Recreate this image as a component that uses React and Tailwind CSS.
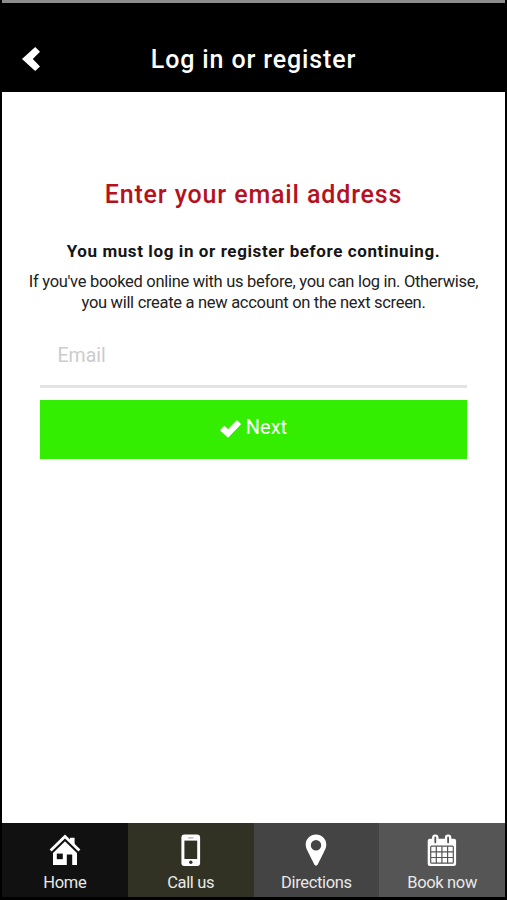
import React, { useState } from "react";

function BackIcon() {
  return (
    <svg viewBox="0 0 18 24" className="w-[18px] h-6" fill="#fff">
      <path d="M13.2 0 L18 4.8 L10.8 12 L18 19.4 L13.2 24 L0 12 Z" />
    </svg>
  );
}

function CheckIcon() {
  return (
    <svg viewBox="0 0 21 19" className="mt-[3px] w-[21px] h-[19px]" fill="#fff" stroke="#fff" strokeLinejoin="round">
      <path d="M1 11.2 L4.3 7.8 L8.2 11.3 L16.8 2.2 L20 5.2 L8 17.6 Z" strokeWidth="1.6" />
    </svg>
  );
}

function HomeIcon() {
  return (
    <svg viewBox="0 0 32 32" className="w-8 h-8">
      <path d="M21 3.8 H25.6 V13 L21 8.5 Z" fill="#fff" />
      <path d="M4 17.6 L16 6 L28 17.6 V31 H23.2 V20.5 H17.8 V31 H4 Z" fill="#fff" />
      <path d="M7.8 19.6 H13.8 V25.2 H7.8 Z" fill="#111" />
      <path d="M2.6 18.2 L16 5 L29.4 18.2" fill="none" stroke="#111" strokeWidth="3.2" />
      <path d="M1.6 16.6 L16 2.4 L30.4 16.6" fill="none" stroke="#fff" strokeWidth="2.8" />
    </svg>
  );
}

function PhoneIcon() {
  return (
    <svg viewBox="0 0 32 32" className="w-8 h-8">
      <rect x="6.4" y="0.5" width="18.7" height="31.5" rx="3" fill="#fff" />
      <rect x="9.4" y="6.6" width="12.8" height="18.4" fill="#323224" />
      <rect x="13.1" y="3.2" width="5.5" height="1.2" rx="0.6" fill="#aaa" />
      <circle cx="15.8" cy="28.3" r="1.7" fill="#323224" />
    </svg>
  );
}

function PinIcon() {
  return (
    <svg viewBox="0 0 32 32" className="w-8 h-8">
      <path
        d="M16 0.6 C10.2 0.6 5.7 5 5.7 10.6 C5.7 13.8 7 16 8.3 18.6 L14.3 30.6 C15 32 17 32 17.7 30.6 L23.7 18.6 C25 16 26.3 13.8 26.3 10.6 C26.3 5 21.8 0.6 16 0.6 Z M16 6 A5.2 5.2 0 1 1 16 16.4 A5.2 5.2 0 1 1 16 6 Z"
        fill="#fff"
        fillRule="evenodd"
      />
    </svg>
  );
}

function CalendarIcon() {
  return (
    <svg viewBox="0 0 32 32" className="w-8 h-8">
      <rect x="1.7" y="4.8" width="28.4" height="27.2" rx="2.2" fill="#fff" />
      <rect x="6.1" y="0.4" width="6.4" height="10.5" rx="3" fill="#fff" />
      <rect x="18.9" y="0.4" width="6.4" height="10.5" rx="3" fill="#fff" />
      <path d="M9.3 3.4 V8.4 M22.1 3.4 V8.4" stroke="#555" strokeWidth="1.8" strokeLinecap="round" />
      <rect x="4.7" y="12.2" width="22.6" height="17" rx="1" fill="none" stroke="#555" strokeWidth="1.2" />
      <path
        d="M10.3 12.2 V29.2 M15.9 12.2 V29.2 M21.6 12.2 V29.2 M4.7 17.8 H27.3 M4.7 23.5 H27.3"
        stroke="#555"
        strokeWidth="1.2"
      />
    </svg>
  );
}

const tabs = [
  { label: "Home", icon: HomeIcon, bg: "bg-[#111111]" },
  { label: "Call us", icon: PhoneIcon, bg: "bg-[#323224]" },
  { label: "Directions", icon: PinIcon, bg: "bg-[#444444]" },
  { label: "Book now", icon: CalendarIcon, bg: "bg-[#555555]" },
];

function App() {
  const [email, setEmail] = useState("");

  return (
    <div className="flex h-[900px] w-[507px] flex-col overflow-hidden bg-black font-['Roboto',sans-serif]">
      {/* Status bar edge */}
      <div className="mx-[2px] h-[2.5px] shrink-0 bg-[#8c8c8c]" />

      {/* Header */}
      <header className="grid h-[89px] shrink-0 grid-cols-[60px_1fr_60px] items-center pt-[26px]">
        <button className="mb-[2px] ml-[22px]" aria-label="Back">
          <BackIcon />
        </button>
        <h1 className="whitespace-nowrap text-center text-[25px] font-medium leading-8 tracking-[0.87px] text-white">
          Log in or register
        </h1>
      </header>

      {/* Email form */}
      <main className="mx-[2px] flex h-[731px] shrink-0 flex-col bg-white pt-[87px] text-center">
        <h2 className="whitespace-nowrap text-[25px] font-medium leading-8 tracking-[0.86px] text-[#b5121f]">
          Enter your email address
        </h2>
        <p className="mt-[30px] whitespace-nowrap text-[17px] font-bold leading-5 tracking-[0.6px] text-[#151515]">
          You must log in or register before continuing.
        </p>
        <p className="mt-[10px] whitespace-nowrap text-[16.5px] leading-[21px] tracking-[-0.3px] text-[#222222]">
          If you've booked online with us before, you can log in. Otherwise,
          <br />
          you will create a new account on the next screen.
        </p>
        <form className="mx-[38px] mt-[9px] flex flex-col" onSubmit={(e) => e.preventDefault()}>
          <input
            type="text"
            placeholder="Email"
            value={email}
            onChange={(e) => setEmail(e.target.value)}
            className="h-[66px] border-b-[3px] border-[#e3e3e3] px-[17.5px] pt-[5px] text-[19.5px] outline-none placeholder:text-[#cccccc]"
          />
          <button
            type="submit"
            className="mt-3 flex h-[59px] items-center justify-center gap-[5px] bg-[#33ee00] pb-[4px] text-[20px] text-white"
          >
            <CheckIcon />
            Next
          </button>
        </form>
      </main>

      {/* Bottom tabs */}
      <nav className="mx-[2px] grid h-[74.5px] shrink-0 grid-cols-4">
        {tabs.map(({ label, icon: Icon, bg }) => (
          <button key={label} className={`flex flex-col items-center pt-[11px] text-[#e8e8e8] ${bg}`}>
            <Icon />
            <span className="mt-[7px] whitespace-nowrap text-[16.5px] leading-5 tracking-[-0.35px]">{label}</span>
          </button>
        ))}
      </nav>
    </div>
  );
}

export default App;
